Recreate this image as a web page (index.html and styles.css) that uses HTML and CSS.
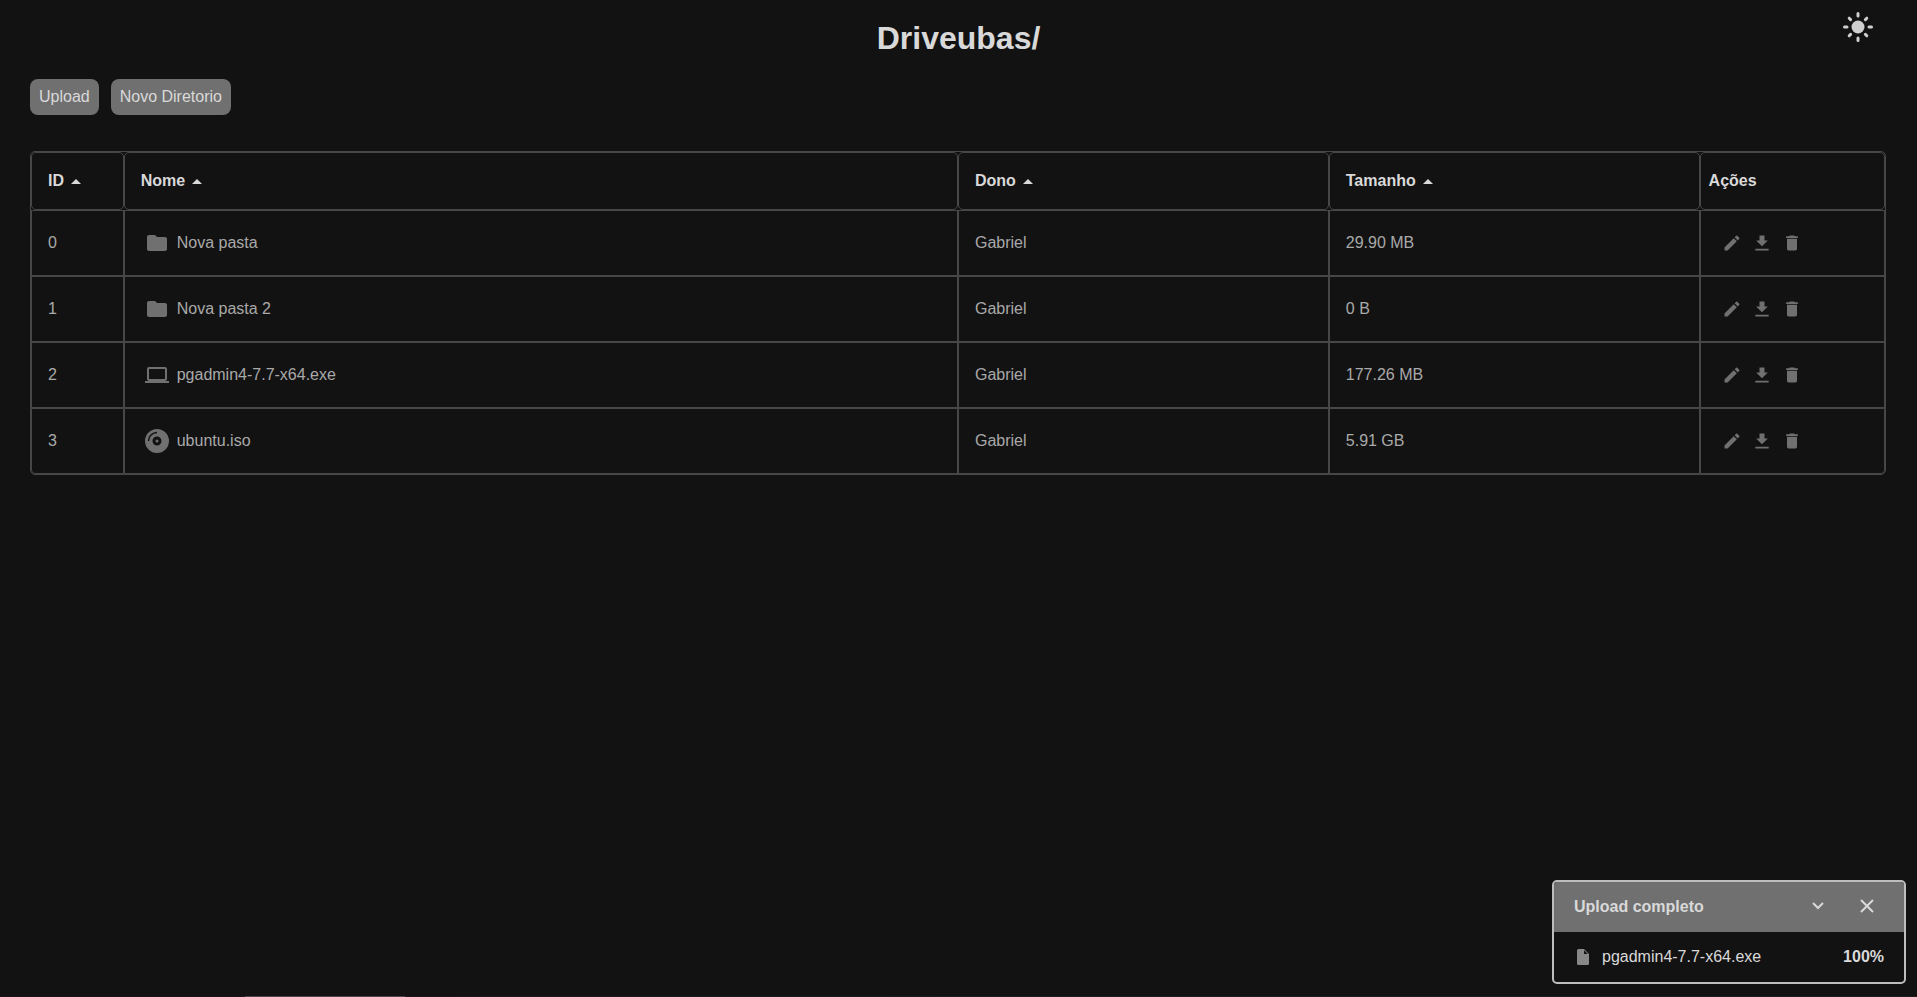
FILE: index.html
```
<!DOCTYPE html>
<html lang="pt-BR">
<head>
<meta charset="utf-8">
<title>Driveubas</title>
<link rel="stylesheet" href="styles.css">
</head>
<body>
<svg class="sprite" aria-hidden="true">
  <symbol id="folder" viewBox="0 0 24 24"><path d="M10 4H4c-1.100 0-2 .9-2 2v12c0 1.100.9 2 2 2h16c1.100 0 2-.9 2-2V8c0-1.100-.9-2-2-2h-8l-2-2z"/></symbol>
  <symbol id="laptop" viewBox="0 0 24 24"><path d="M20 18c1.100 0 2-.9 2-2V6c0-1.100-.9-2-2-2H4c-1.100 0-2 .9-2 2v10c0 1.100.9 2 2 2H0v2h24v-2h-4zM4 6h16v10H4V6z"/></symbol>
  <symbol id="disc" viewBox="0 0 24 24"><path fill-rule="evenodd" d="M12 0a12 12 0 1 0 0 24a12 12 0 0 0 0-24zM12 7.500a4.500 4.500 0 1 1 0 9a4.500 4.500 0 0 1 0-9z"/><circle cx="12" cy="12" r="1.500"/><path class="groove" d="M3.500 12A8.500 8.500 0 0 1 12 3.500"/></symbol>
  <symbol id="pencil" viewBox="0 0 24 24"><path d="M3 17.250V21h3.750L17.810 9.940l-3.750-3.750L3 17.250zM20.710 7.040a1 1 0 0 0 0-1.410l-2.340-2.340a1 1 0 0 0-1.410 0l-1.830 1.830 3.750 3.750 1.830-1.830z"/></symbol>
  <symbol id="download" viewBox="0 0 24 24"><path d="M19 9h-4V3H9v6H5l7 7 7-7zM4 19h16v2H4z"/></symbol>
  <symbol id="trash" viewBox="0 0 24 24"><path d="M6 19c0 1.100.9 2 2 2h8c1.100 0 2-.9 2-2V7H6v12zM19 4h-3.500l-1-1h-5l-1 1H5v2h14V4z"/></symbol>
  <symbol id="sort" viewBox="0 0 10 5"><path d="M0 5L5 0l5 5z"/></symbol>
</svg>
<header class="topbar">
  <h1 class="title">Driveubas/</h1>
  <button class="theme" aria-label="Alternar tema">
    <svg class="sun" viewBox="0 0 32 32"><circle cx="16" cy="16" r="6.500"/><g class="rays"><path d="M16 2.500v2.500M16 27v2.500M2.500 16H5M27 16h2.500M7.200 7.200l1.400 1.400M23.400 23.400l1.400 1.400M7.200 24.800l1.400-1.400M23.400 8.600l1.400-1.400"/></g></svg>
  </button>
</header>
<main class="content">
  <div class="actions">
    <button class="button">Upload</button>
    <button class="button">Novo Diretorio</button>
  </div>
  <table class="files">
    <colgroup><col class="col-id"><col class="col-name"><col class="col-owner"><col class="col-size"><col class="col-tools"></colgroup>
    <thead>
      <tr>
        <th><button class="sort">ID <svg><use href="#sort"/></svg></button></th>
        <th><button class="sort">Nome <svg><use href="#sort"/></svg></button></th>
        <th><button class="sort">Dono <svg><use href="#sort"/></svg></button></th>
        <th><button class="sort">Tamanho <svg><use href="#sort"/></svg></button></th>
        <th class="plain">Ações</th>
      </tr>
    </thead>
    <tbody>
      <tr>
        <td>0</td>
        <td><div class="name"><svg><use href="#folder"/></svg>Nova pasta</div></td>
        <td>Gabriel</td><td>29.90 MB</td>
        <td><div class="tools"><button aria-label="Renomear"><svg><use href="#pencil"/></svg></button><button aria-label="Baixar"><svg><use href="#download"/></svg></button><button aria-label="Excluir"><svg><use href="#trash"/></svg></button></div></td>
      </tr>
      <tr>
        <td>1</td>
        <td><div class="name"><svg><use href="#folder"/></svg>Nova pasta 2</div></td>
        <td>Gabriel</td><td>0 B</td>
        <td><div class="tools"><button aria-label="Renomear"><svg><use href="#pencil"/></svg></button><button aria-label="Baixar"><svg><use href="#download"/></svg></button><button aria-label="Excluir"><svg><use href="#trash"/></svg></button></div></td>
      </tr>
      <tr>
        <td>2</td>
        <td><div class="name"><svg><use href="#laptop"/></svg>pgadmin4-7.7-x64.exe</div></td>
        <td>Gabriel</td><td>177.26 MB</td>
        <td><div class="tools"><button aria-label="Renomear"><svg><use href="#pencil"/></svg></button><button aria-label="Baixar"><svg><use href="#download"/></svg></button><button aria-label="Excluir"><svg><use href="#trash"/></svg></button></div></td>
      </tr>
      <tr>
        <td>3</td>
        <td><div class="name"><svg><use href="#disc"/></svg>ubuntu.iso</div></td>
        <td>Gabriel</td><td>5.91 GB</td>
        <td><div class="tools"><button aria-label="Renomear"><svg><use href="#pencil"/></svg></button><button aria-label="Baixar"><svg><use href="#download"/></svg></button><button aria-label="Excluir"><svg><use href="#trash"/></svg></button></div></td>
      </tr>
    </tbody>
  </table>
</main>
<aside class="uploads">
  <div class="uploads-head">
    <strong>Upload completo</strong>
    <div class="uploads-tools">
      <button aria-label="Minimizar"><svg class="chevron" viewBox="0 0 12 8"><path d="M1 1l5 5 5-5"/></svg></button>
      <button aria-label="Fechar"><svg class="close" viewBox="0 0 14 14"><path d="M1 1l12 12M13 1L1 13"/></svg></button>
    </div>
  </div>
  <div class="upload">
    <svg class="doc" viewBox="0 0 12 16"><path fill-rule="evenodd" d="M1.500 0H7l5 5v9.500a1.500 1.500 0 0 1-1.500 1.500h-9A1.500 1.500 0 0 1 0 14.500v-13A1.500 1.500 0 0 1 1.500 0zM7 1.200V5h3.800z"/></svg>
    <span class="upload-name">pgadmin4-7.7-x64.exe</span>
    <strong>100%</strong>
  </div>
</aside>
<div class="edge"></div>
</body>
</html>
```
FILE: styles.css
```
* { box-sizing: border-box; }
body {
  margin: 0;
  min-height: 100vh;
  background: #121212;
  color: #d9d9d9;
  font: 16px/18px "Liberation Sans", Arial, sans-serif;
}
button {
  margin: 0;
  padding: 0;
  border: 0;
  background: none;
  color: inherit;
  font: inherit;
  cursor: pointer;
}
svg { display: block; fill: currentColor; }
.sprite { position: absolute; width: 0; height: 0; }
.topbar {
  display: grid;
  grid-template-columns: 1fr auto 1fr;
  align-items: start;
  padding: 11px 43px 0;
}
.title { grid-column: 2; margin: 9px 0 0; font-size: 32px; line-height: 36px; }
.theme { justify-self: end; }
.sun { width: 32px; height: 32px; fill: #cfcfcf; }
.rays { fill: none; stroke: #cfcfcf; stroke-width: 3; stroke-linecap: round; }
.content { padding: 23px 31px 0 30px; }
.actions { display: flex; gap: 12px; margin-bottom: 36px; }
.button { padding: 9px; border-radius: 8px; background: #707070; }
.files {
  width: 100%;
  table-layout: fixed;
  border: 1px solid #474747;
  border-radius: 5px;
  border-collapse: separate;
  border-spacing: 0;
}
.col-id { width: 5%; }
.col-name { width: 45%; }
.col-owner, .col-size { width: 20%; }
.col-tools { width: 10%; }
th, td { border: 1px solid #474747; padding: 0 16px; text-align: left; }
th { height: 58px; border-radius: 5px; }
th.plain { padding: 0 8px; }
td { height: 66px; color: #a9a9a9; }
tr:last-child td:first-child { border-bottom-left-radius: 4px; }
tr:last-child td:last-child { border-bottom-right-radius: 4px; }
.sort { display: flex; align-items: center; gap: 7px; }
.sort svg { width: 10px; height: 5px; }
.name { display: flex; align-items: center; gap: 8px; padding-left: 4px; }
.name svg { width: 24px; height: 24px; color: #707070; }
.groove { fill: none; stroke: #121212; stroke-width: 1.5; }
.tools { display: flex; gap: 10px; padding-left: 5px; color: #707070; }
.tools svg { width: 20px; height: 20px; }
.uploads {
  position: fixed;
  right: 11px;
  bottom: 13px;
  width: 354px;
  overflow: hidden;
  border: 2px solid #bdbdbd;
  border-radius: 5px;
  background: #121212;
}
.uploads-head {
  display: flex;
  align-items: center;
  justify-content: space-between;
  height: 50px;
  padding: 0 30px 0 20px;
  background: #707070;
}
.uploads-tools { display: flex; align-items: center; gap: 36px; padding-bottom: 3px; }
.uploads-head path { fill: none; stroke: #d9d9d9; stroke-width: 2; }
.chevron { width: 12px; height: 8px; }
.close { width: 14px; height: 14px; }
.upload { display: flex; align-items: center; height: 50px; padding: 0 20px 0 23px; }
.upload-name { flex: 1; padding-left: 13px; }
.doc { width: 12px; height: 16px; color: #888; }
.edge {
  position: fixed;
  inset: auto 0 0;
  height: 1px;
  background:
    linear-gradient(#4c4648, #4c4648) 245px 0 / 160px 1px no-repeat,
    linear-gradient(90deg, #1c1217, #1e1e1e 50%);
}
```
